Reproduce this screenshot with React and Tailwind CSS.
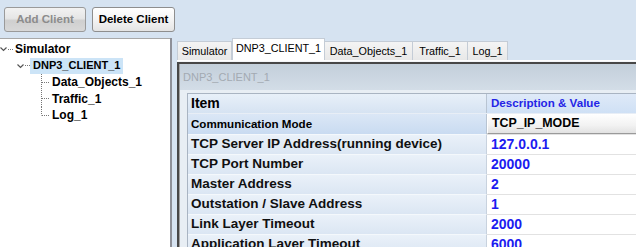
import React from "react";

const F = { fontFamily: '"Liberation Sans", Arial, sans-serif' };

function Chevron({ className }) {
  return (
    <svg width="7" height="5" viewBox="0 0 7 5" className={className}>
      <polyline points="0.5,0.5 3.5,3.5 6.5,0.5" fill="none" stroke="#555" strokeWidth="1.2" />
    </svg>
  );
}

function ChildRow({ label, last }) {
  return (
    <div className="flex h-[16.5px] items-center">
      <svg width="52" height="17" viewBox="0 0 52 17" className="shrink-0">
        <line x1="41.5" y1="0" x2="41.5" y2={last ? 8.5 : 17} stroke="#777" strokeDasharray="1 1" />
        <line x1="42" y1="8.5" x2="50" y2="8.5" stroke="#777" strokeDasharray="1 1" />
      </svg>
      <span className="text-[12px] font-bold text-black leading-none">{label}</span>
    </div>
  );
}

const rows = [
  ["TCP Server IP Address(running device)", "127.0.0.1"],
  ["TCP Port Number", "20000"],
  ["Master Address", "2"],
  ["Outstation / Slave Address", "1"],
  ["Link Layer Timeout", "2000"],
  ["Application Layer Timeout", "6000"],
];

export default function App() {
  return (
    <div style={F} className="w-[636px] h-[247px] overflow-hidden bg-[#d6e3f1] flex flex-col">
      {/* toolbar */}
      <div className="h-[38px] flex items-start pt-[7px] pl-[4px] gap-[6px] shrink-0">
        <div className="w-[82px] h-[25px] rounded-[3px] border border-[#9a9a9a] bg-[linear-gradient(#f2f2f2_0%,#e6e6e6_45%,#cfcfcf_55%,#d8d8d8_100%)] flex items-center justify-center text-[11.5px] font-bold text-[#8c8c8c]">
          Add Client
        </div>
        <div className="w-[83px] h-[25px] rounded-[3px] border border-[#8e8e8e] bg-[linear-gradient(#ffffff_0%,#f4f4f4_50%,#e4e4e4_100%)] flex items-center justify-center text-[11.5px] font-bold text-black">
          Delete Client
        </div>
      </div>
      <div className="flex flex-1 min-h-0">
        {/* tree */}
        <div className="w-[170px] bg-white border-t border-[#a8a8a8] pt-[2px] shrink-0">
          <div className="flex h-[16.5px] items-center">
            <Chevron className="ml-[0px] mt-[1px]" />
            <svg width="7" height="3" className="ml-[1px]"><line x1="0" y1="1.5" x2="6" y2="1.5" stroke="#777" strokeDasharray="1 1" /></svg>
            <span className="ml-[0px] text-[12px] font-bold text-black leading-none">Simulator</span>
          </div>
          <div className="flex h-[16.5px] items-center">
            <Chevron className="ml-[17px] mt-[1px]" />
            <svg width="6" height="3"><line x1="1" y1="1.5" x2="6" y2="1.5" stroke="#777" strokeDasharray="1 1" /></svg>
            <span className="h-[16px] px-[3px] bg-[#cce4f7] flex items-center text-[11px] font-bold text-black leading-none">DNP3_CLIENT_1</span>
          </div>
          <ChildRow label="Data_Objects_1" />
          <ChildRow label="Traffic_1" />
          <ChildRow label="Log_1" last />
        </div>
        {/* splitter */}
        <div className="w-[2px] bg-[#8e9098] shrink-0" />
        <div className="flex-1 flex flex-col min-w-0 pl-[5px]">
          {/* tabs */}
          <div className="h-[22px] flex items-end shrink-0 text-[10.8px] text-black">
            <div className="h-[19px] w-[55px] border border-b-0 border-[#c4ccd6] bg-[linear-gradient(#f4f4f4,#e8e8e8)] flex items-center justify-center">Simulator</div>
            <div className="h-[22px] w-[93px] border border-b-0 border-[#c4ccd6] bg-white flex items-center justify-center pb-[3px]">DNP3_CLIENT_1</div>
            <div className="h-[19px] w-[88px] border border-b-0 border-l-0 border-[#c4ccd6] bg-[linear-gradient(#f4f4f4,#e8e8e8)] flex items-center justify-center">Data_Objects_1</div>
            <div className="h-[19px] w-[55px] border border-b-0 border-l-0 border-[#c4ccd6] bg-[linear-gradient(#f4f4f4,#e8e8e8)] flex items-center justify-center">Traffic_1</div>
            <div className="h-[19px] w-[40px] border border-b-0 border-l-0 border-[#c4ccd6] bg-[linear-gradient(#f4f4f4,#e8e8e8)] flex items-center justify-center">Log_1</div>
          </div>
          {/* content */}
          <div className="flex-1 min-h-0 border-t border-white bg-[#f4f6f8] pt-[1px]">
            <div className="h-full border-l-2 border-t-2 border-[#474747] bg-[#e8eef4] flex flex-col">
              <div className="h-[26px] shrink-0 bg-[linear-gradient(#c3cfda,#d3dde7)] flex items-center pl-[3px] text-[11px] text-[#a3aab2] border-l border-[#a0a0a0]">
                DNP3_CLIENT_1
              </div>
              <div className="flex-1 border-l border-[#a0a0a0] pl-[7px] pt-[3px]">
                <div className="border-l border-t border-[#a9b4c2] bg-white">
                  {/* header */}
                  <div className="flex h-[20px] border-b border-[#e8eef6]">
                    <div className="w-[299px] shrink-0 bg-[linear-gradient(#e8f0f9,#d6e3f2)] border-r border-[#b8c4d2] flex items-center pl-[3px] text-[14px] font-bold text-black">
                      Item
                    </div>
                    <div className="flex-1 bg-[linear-gradient(#dfeaf8,#cfe0f5)] flex items-center pl-[4px] pb-[2px] text-[11.6px] font-bold text-[#2424e6]">
                      Description &amp; Value
                    </div>
                  </div>
                  {/* comm mode */}
                  <div className="flex h-[20px]">
                    <div className="w-[299px] shrink-0 bg-[linear-gradient(#dbe7f6,#c9dbf1)] border-r border-[#b8c4d2] flex items-center pl-[3px] text-[11.6px] font-bold text-black">
                      Communication Mode
                    </div>
                    <div className="flex-1 bg-[linear-gradient(#ffffff,#f2f2f2_60%,#e2e2e2)] border-b border-[#9a9a9a] border-l border-l-white flex items-center pl-[4px] text-[12.4px] font-bold text-black">
                      TCP_IP_MODE
                    </div>
                  </div>
                  {rows.map(([k, v]) => (
                    <div key={k} className="flex h-[20px]">
                      <div className="w-[299px] shrink-0 bg-[linear-gradient(#eaf1f9,#dbe6f3)] border-r border-[#c8d2de] border-t border-t-[#f4f8fc] flex items-center pl-[3px] text-[13.5px] font-bold text-[#101010]">
                        {k}
                      </div>
                      <div className="flex-1 border-t border-[#e2e2e2] flex items-center pl-[4px] text-[14px] font-bold text-[#1c1cf0]">
                        {v}
                      </div>
                    </div>
                  ))}
                </div>
              </div>
            </div>
          </div>
        </div>
      </div>
    </div>
  );
}
